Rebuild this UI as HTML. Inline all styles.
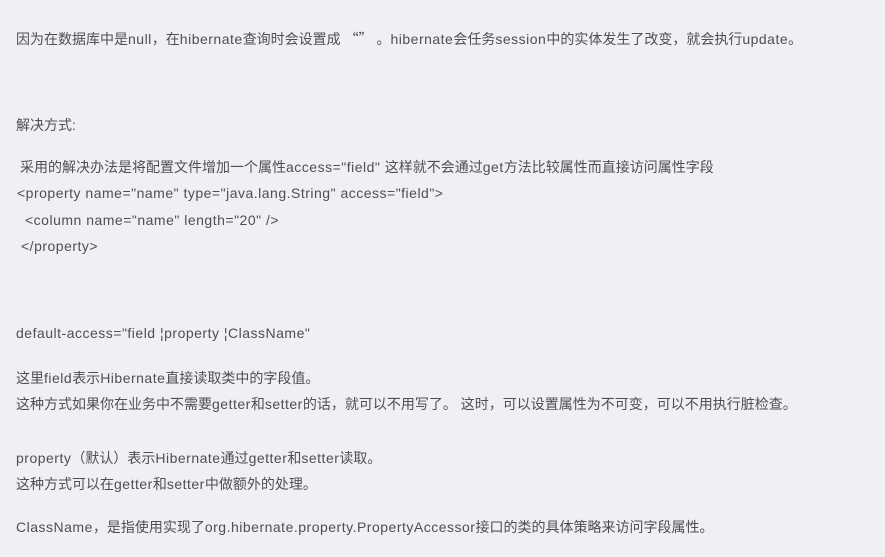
<!DOCTYPE html>
<html><head><meta charset="utf-8"><style>
body{margin:0;width:885px;height:557px;background:#eef0f4;overflow:hidden;font-family:"Liberation Sans","Noto Sans CJK SC",sans-serif;font-size:14px;color:#4f4f4f}
div{position:absolute;left:16px;line-height:20px;white-space:nowrap}
i{font-style:normal;letter-spacing:0.5px}
b{font-weight:normal;font-family:"Noto Sans CJK SC",sans-serif}
</style></head><body>
<div style="top:29px">因为在数据库中是<i>null</i>，在<i>hibernate</i>查询时会设置成 <b>“”</b> 。<i>hibernate</i>会任务<i>session</i>中的实体发生了改变，就会执行<i>update</i>。</div>
<div style="top:115px">解决方式:</div>
<div style="top:157px;left:20px">采用的解决办法是将配置文件增加一个属性<i>access="field" </i>这样就不会通过<i>get</i>方法比较属性而直接访问属性字段</div>
<div style="top:183px;left:17px"><i>&lt;property name="name" type="java.lang.String" access="field"&gt;</i></div>
<div style="top:210px;left:25px"><i>&lt;column name="name" length="20" /&gt;</i></div>
<div style="top:236px;left:21px"><i>&lt;/property&gt;</i></div>
<div style="top:323px"><i>default-access="field ¦property ¦ClassName"</i></div>
<div style="top:368px">这里<i>field</i>表示<i>Hibernate</i>直接读取类中的字段值。</div>
<div style="top:394px">这种方式如果你在业务中不需要<i>getter</i>和<i>setter</i>的话，就可以不用写了。 这时，可以设置属性为不可变，可以不用执行脏检查。</div>
<div style="top:448px"><i>property</i>（默认）表示<i>Hibernate</i>通过<i>getter</i>和<i>setter</i>读取。</div>
<div style="top:474px">这种方式可以在<i>getter</i>和<i>setter</i>中做额外的处理。</div>
<div style="top:517px"><i>ClassName</i>，是指使用实现了<i>org.hibernate.property.PropertyAccessor</i>接口的类的具体策略来访问字段属性。</div>
</body></html>
